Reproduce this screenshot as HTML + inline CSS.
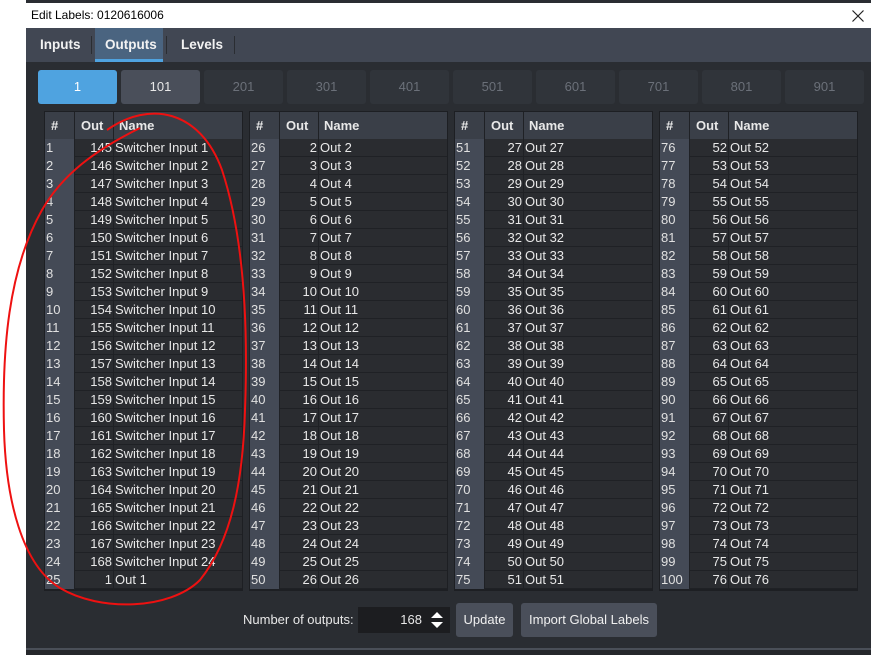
<!DOCTYPE html>
<html><head><meta charset="utf-8"><style>
*{margin:0;padding:0;box-sizing:border-box}
body{width:871px;height:655px;background:#fff;position:relative;overflow:hidden;font-family:"Liberation Sans",sans-serif;font-size:13px;color:#e8e8e8}
.win{position:absolute;left:26px;top:0;width:845px;height:655px;background:#2a2d32}
.title{position:absolute;left:26px;top:3px;width:845px;height:25px;background:#fff;color:#000;font-size:12px;line-height:25px;padding-left:5px}
.tabs{position:absolute;left:26px;top:28px;width:845px;height:34px;background:#414753}
.tab{position:absolute;top:0;height:34px;line-height:34px;font-weight:bold;font-size:13.5px;color:#f2f2f2}
.sep{position:absolute;top:8px;width:1px;height:18px;background:#2a2d32}
.pb{position:absolute;top:70px;width:79px;height:34px;border-radius:3px;background:#30343a;color:#6b7079;text-align:center;line-height:34px;font-size:13px}
.tbl{position:absolute;top:111px;width:199px;height:480px;background:#1d1f23;border:1px solid #1d1f23}
.hd{height:27px;background:#3a3f48;position:relative;font-weight:bold;line-height:27px}
.hd span{position:absolute;top:0}
.r{height:18px;position:relative;line-height:17px;background:#2a2c30;border-bottom:1px solid #1f2125}
.r i{font-style:normal;position:absolute;left:0;top:0;width:29px;height:18px;background:#444a56;color:#e0e0e0;padding-left:1px}
.r b{font-weight:normal;position:absolute;left:29px;width:38px;text-align:right;top:0}
.r s{text-decoration:none;position:absolute;left:70px;top:0;white-space:nowrap}
.c1{position:absolute;left:29px;top:0;width:1px;height:478px;background:#1f2125;z-index:2}
.c2{position:absolute;left:68px;top:0;width:1px;height:478px;background:#1f2125;z-index:2}
.btn{position:absolute;top:603px;height:34px;background:#4a4f5a;border-radius:3px;line-height:34px;text-align:center;color:#f0f0f0}
</style></head><body>
<div class="win"></div>
<div class="title">Edit Labels: 0120616006<svg style="position:absolute;right:7px;top:7px" width="12" height="12"><path d="M0.5 0.5 L11.5 11.5 M11.5 0.5 L0.5 11.5" stroke="#222" stroke-width="1.2"/></svg></div>
<div class="tabs">
<div class="tab" style="left:14px">Inputs</div>
<div class="sep" style="left:65px"></div>
<div style="position:absolute;left:69px;top:0;width:68px;height:34px;background:#4a6480"></div>
<div style="position:absolute;left:69px;top:31px;width:68px;height:3px;background:#4fa3e0"></div>
<div class="tab" style="left:79px">Outputs</div>
<div class="sep" style="left:140px"></div>
<div class="tab" style="left:155px">Levels</div>
<div class="sep" style="left:208px"></div>
</div>
<div class="pb" style="left:38px;background:#4fa3e0;color:#fff">1</div>
<div class="pb" style="left:121px;background:#4a4f5a;color:#e8e8e8">101</div>
<div class="pb" style="left:204px">201</div>
<div class="pb" style="left:287px">301</div>
<div class="pb" style="left:370px">401</div>
<div class="pb" style="left:453px">501</div>
<div class="pb" style="left:536px">601</div>
<div class="pb" style="left:619px">701</div>
<div class="pb" style="left:702px">801</div>
<div class="pb" style="left:785px">901</div>

<div class="tbl" style="left:44px"><div class="c1"></div><div class="c2"></div>
<div class="hd"><span style="left:6px">#</span><span style="left:36px">Out</span><span style="left:74px">Name</span></div>
<div class="r"><i>1</i><b>145</b><s>Switcher Input 1</s></div>
<div class="r"><i>2</i><b>146</b><s>Switcher Input 2</s></div>
<div class="r"><i>3</i><b>147</b><s>Switcher Input 3</s></div>
<div class="r"><i>4</i><b>148</b><s>Switcher Input 4</s></div>
<div class="r"><i>5</i><b>149</b><s>Switcher Input 5</s></div>
<div class="r"><i>6</i><b>150</b><s>Switcher Input 6</s></div>
<div class="r"><i>7</i><b>151</b><s>Switcher Input 7</s></div>
<div class="r"><i>8</i><b>152</b><s>Switcher Input 8</s></div>
<div class="r"><i>9</i><b>153</b><s>Switcher Input 9</s></div>
<div class="r"><i>10</i><b>154</b><s>Switcher Input 10</s></div>
<div class="r"><i>11</i><b>155</b><s>Switcher Input 11</s></div>
<div class="r"><i>12</i><b>156</b><s>Switcher Input 12</s></div>
<div class="r"><i>13</i><b>157</b><s>Switcher Input 13</s></div>
<div class="r"><i>14</i><b>158</b><s>Switcher Input 14</s></div>
<div class="r"><i>15</i><b>159</b><s>Switcher Input 15</s></div>
<div class="r"><i>16</i><b>160</b><s>Switcher Input 16</s></div>
<div class="r"><i>17</i><b>161</b><s>Switcher Input 17</s></div>
<div class="r"><i>18</i><b>162</b><s>Switcher Input 18</s></div>
<div class="r"><i>19</i><b>163</b><s>Switcher Input 19</s></div>
<div class="r"><i>20</i><b>164</b><s>Switcher Input 20</s></div>
<div class="r"><i>21</i><b>165</b><s>Switcher Input 21</s></div>
<div class="r"><i>22</i><b>166</b><s>Switcher Input 22</s></div>
<div class="r"><i>23</i><b>167</b><s>Switcher Input 23</s></div>
<div class="r"><i>24</i><b>168</b><s>Switcher Input 24</s></div>
<div class="r"><i>25</i><b>1</b><s>Out 1</s></div>
</div>

<div class="tbl" style="left:249px"><div class="c1"></div><div class="c2"></div>
<div class="hd"><span style="left:6px">#</span><span style="left:36px">Out</span><span style="left:74px">Name</span></div>
<div class="r"><i>26</i><b>2</b><s>Out 2</s></div>
<div class="r"><i>27</i><b>3</b><s>Out 3</s></div>
<div class="r"><i>28</i><b>4</b><s>Out 4</s></div>
<div class="r"><i>29</i><b>5</b><s>Out 5</s></div>
<div class="r"><i>30</i><b>6</b><s>Out 6</s></div>
<div class="r"><i>31</i><b>7</b><s>Out 7</s></div>
<div class="r"><i>32</i><b>8</b><s>Out 8</s></div>
<div class="r"><i>33</i><b>9</b><s>Out 9</s></div>
<div class="r"><i>34</i><b>10</b><s>Out 10</s></div>
<div class="r"><i>35</i><b>11</b><s>Out 11</s></div>
<div class="r"><i>36</i><b>12</b><s>Out 12</s></div>
<div class="r"><i>37</i><b>13</b><s>Out 13</s></div>
<div class="r"><i>38</i><b>14</b><s>Out 14</s></div>
<div class="r"><i>39</i><b>15</b><s>Out 15</s></div>
<div class="r"><i>40</i><b>16</b><s>Out 16</s></div>
<div class="r"><i>41</i><b>17</b><s>Out 17</s></div>
<div class="r"><i>42</i><b>18</b><s>Out 18</s></div>
<div class="r"><i>43</i><b>19</b><s>Out 19</s></div>
<div class="r"><i>44</i><b>20</b><s>Out 20</s></div>
<div class="r"><i>45</i><b>21</b><s>Out 21</s></div>
<div class="r"><i>46</i><b>22</b><s>Out 22</s></div>
<div class="r"><i>47</i><b>23</b><s>Out 23</s></div>
<div class="r"><i>48</i><b>24</b><s>Out 24</s></div>
<div class="r"><i>49</i><b>25</b><s>Out 25</s></div>
<div class="r"><i>50</i><b>26</b><s>Out 26</s></div>
</div>

<div class="tbl" style="left:454px"><div class="c1"></div><div class="c2"></div>
<div class="hd"><span style="left:6px">#</span><span style="left:36px">Out</span><span style="left:74px">Name</span></div>
<div class="r"><i>51</i><b>27</b><s>Out 27</s></div>
<div class="r"><i>52</i><b>28</b><s>Out 28</s></div>
<div class="r"><i>53</i><b>29</b><s>Out 29</s></div>
<div class="r"><i>54</i><b>30</b><s>Out 30</s></div>
<div class="r"><i>55</i><b>31</b><s>Out 31</s></div>
<div class="r"><i>56</i><b>32</b><s>Out 32</s></div>
<div class="r"><i>57</i><b>33</b><s>Out 33</s></div>
<div class="r"><i>58</i><b>34</b><s>Out 34</s></div>
<div class="r"><i>59</i><b>35</b><s>Out 35</s></div>
<div class="r"><i>60</i><b>36</b><s>Out 36</s></div>
<div class="r"><i>61</i><b>37</b><s>Out 37</s></div>
<div class="r"><i>62</i><b>38</b><s>Out 38</s></div>
<div class="r"><i>63</i><b>39</b><s>Out 39</s></div>
<div class="r"><i>64</i><b>40</b><s>Out 40</s></div>
<div class="r"><i>65</i><b>41</b><s>Out 41</s></div>
<div class="r"><i>66</i><b>42</b><s>Out 42</s></div>
<div class="r"><i>67</i><b>43</b><s>Out 43</s></div>
<div class="r"><i>68</i><b>44</b><s>Out 44</s></div>
<div class="r"><i>69</i><b>45</b><s>Out 45</s></div>
<div class="r"><i>70</i><b>46</b><s>Out 46</s></div>
<div class="r"><i>71</i><b>47</b><s>Out 47</s></div>
<div class="r"><i>72</i><b>48</b><s>Out 48</s></div>
<div class="r"><i>73</i><b>49</b><s>Out 49</s></div>
<div class="r"><i>74</i><b>50</b><s>Out 50</s></div>
<div class="r"><i>75</i><b>51</b><s>Out 51</s></div>
</div>

<div class="tbl" style="left:659px"><div class="c1"></div><div class="c2"></div>
<div class="hd"><span style="left:6px">#</span><span style="left:36px">Out</span><span style="left:74px">Name</span></div>
<div class="r"><i>76</i><b>52</b><s>Out 52</s></div>
<div class="r"><i>77</i><b>53</b><s>Out 53</s></div>
<div class="r"><i>78</i><b>54</b><s>Out 54</s></div>
<div class="r"><i>79</i><b>55</b><s>Out 55</s></div>
<div class="r"><i>80</i><b>56</b><s>Out 56</s></div>
<div class="r"><i>81</i><b>57</b><s>Out 57</s></div>
<div class="r"><i>82</i><b>58</b><s>Out 58</s></div>
<div class="r"><i>83</i><b>59</b><s>Out 59</s></div>
<div class="r"><i>84</i><b>60</b><s>Out 60</s></div>
<div class="r"><i>85</i><b>61</b><s>Out 61</s></div>
<div class="r"><i>86</i><b>62</b><s>Out 62</s></div>
<div class="r"><i>87</i><b>63</b><s>Out 63</s></div>
<div class="r"><i>88</i><b>64</b><s>Out 64</s></div>
<div class="r"><i>89</i><b>65</b><s>Out 65</s></div>
<div class="r"><i>90</i><b>66</b><s>Out 66</s></div>
<div class="r"><i>91</i><b>67</b><s>Out 67</s></div>
<div class="r"><i>92</i><b>68</b><s>Out 68</s></div>
<div class="r"><i>93</i><b>69</b><s>Out 69</s></div>
<div class="r"><i>94</i><b>70</b><s>Out 70</s></div>
<div class="r"><i>95</i><b>71</b><s>Out 71</s></div>
<div class="r"><i>96</i><b>72</b><s>Out 72</s></div>
<div class="r"><i>97</i><b>73</b><s>Out 73</s></div>
<div class="r"><i>98</i><b>74</b><s>Out 74</s></div>
<div class="r"><i>99</i><b>75</b><s>Out 75</s></div>
<div class="r"><i>100</i><b>76</b><s>Out 76</s></div>
</div>

<div style="position:absolute;left:243px;top:612px;line-height:16px">Number of outputs:</div>
<div style="position:absolute;left:358px;top:607px;width:92px;height:26px;background:#1c1d20"></div>
<div style="position:absolute;left:390px;top:612px;width:32px;text-align:right;line-height:16px">168</div>
<svg style="position:absolute;left:430px;top:611px" width="14" height="18"><path d="M1 7 L7 1 L13 7 Z M1 11 L7 17 L13 11 Z" fill="#fff"/></svg>
<div class="btn" style="left:456px;width:57px">Update</div>
<div class="btn" style="left:521px;width:136px">Import Global Labels</div>
<div style="position:absolute;left:26px;top:648px;width:845px;height:2px;background:#4a4f58"></div>
<div style="position:absolute;left:26px;top:650px;width:845px;height:5px;background:#25272b"></div>

<svg style="position:absolute;left:0;top:0;z-index:5" width="871" height="655"><path d="M107 130 C150 100 200 110 222 170 C245 240 248 330 245 410 C243 480 232 540 200 580 C170 610 100 612 60 588 C22 565 6 500 4 430 C2 350 8 270 42 210 C62 175 95 150 140 128" fill="none" stroke="#ee1111" stroke-width="2"/></svg>
</body></html>
